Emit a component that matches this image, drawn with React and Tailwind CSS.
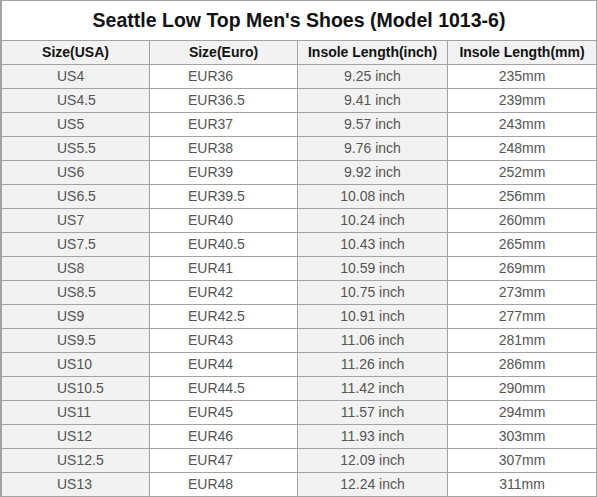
const rows = [
  ["US4", "EUR36", "9.25 inch", "235mm"],
  ["US4.5", "EUR36.5", "9.41 inch", "239mm"],
  ["US5", "EUR37", "9.57 inch", "243mm"],
  ["US5.5", "EUR38", "9.76 inch", "248mm"],
  ["US6", "EUR39", "9.92 inch", "252mm"],
  ["US6.5", "EUR39.5", "10.08 inch", "256mm"],
  ["US7", "EUR40", "10.24 inch", "260mm"],
  ["US7.5", "EUR40.5", "10.43 inch", "265mm"],
  ["US8", "EUR41", "10.59 inch", "269mm"],
  ["US8.5", "EUR42", "10.75 inch", "273mm"],
  ["US9", "EUR42.5", "10.91 inch", "277mm"],
  ["US9.5", "EUR43", "11.06 inch", "281mm"],
  ["US10", "EUR44", "11.26 inch", "286mm"],
  ["US10.5", "EUR44.5", "11.42 inch", "290mm"],
  ["US11", "EUR45", "11.57 inch", "294mm"],
  ["US12", "EUR46", "11.93 inch", "303mm"],
  ["US12.5", "EUR47", "12.09 inch", "307mm"],
  ["US13", "EUR48", "12.24 inch", "311mm"],
];

const headers = ["Size(USA)", "Size(Euro)", "Insole Length(inch)", "Insole Length(mm)"];

export default function App() {
  return (
    <div
      className="w-[597px] h-[497px] bg-white"
      style={{ fontFamily: '"Liberation Sans", Arial, sans-serif' }}
    >
      <div className="grid grid-cols-[147px_147px_149px_148px] gap-px bg-[#a3a3a3] p-px pl-[2px]">
        <div className="col-span-4 h-[39px] bg-white flex items-center justify-center text-[19.5px] font-bold text-[#111]">
          Seattle Low Top Men's Shoes (Model 1013-6)
        </div>
        {headers.map((h) => (
          <div
            key={h}
            className="h-[23px] bg-[#f2f2f2] flex items-center justify-center text-[14px] font-bold text-[#111]"
          >
            {h}
          </div>
        ))}
        {rows.map((r) => (
          <div key={r[0]} className="contents text-[14px] text-[#555]">
            <div className="h-[23px] bg-[#f2f2f2] flex items-center pl-[55px]">{r[0]}</div>
            <div className="h-[23px] bg-white flex items-center pl-[38px]">{r[1]}</div>
            <div className="h-[23px] bg-[#f2f2f2] flex items-center justify-center">{r[2]}</div>
            <div className="h-[23px] bg-white flex items-center justify-center">{r[3]}</div>
          </div>
        ))}
      </div>
    </div>
  );
}
